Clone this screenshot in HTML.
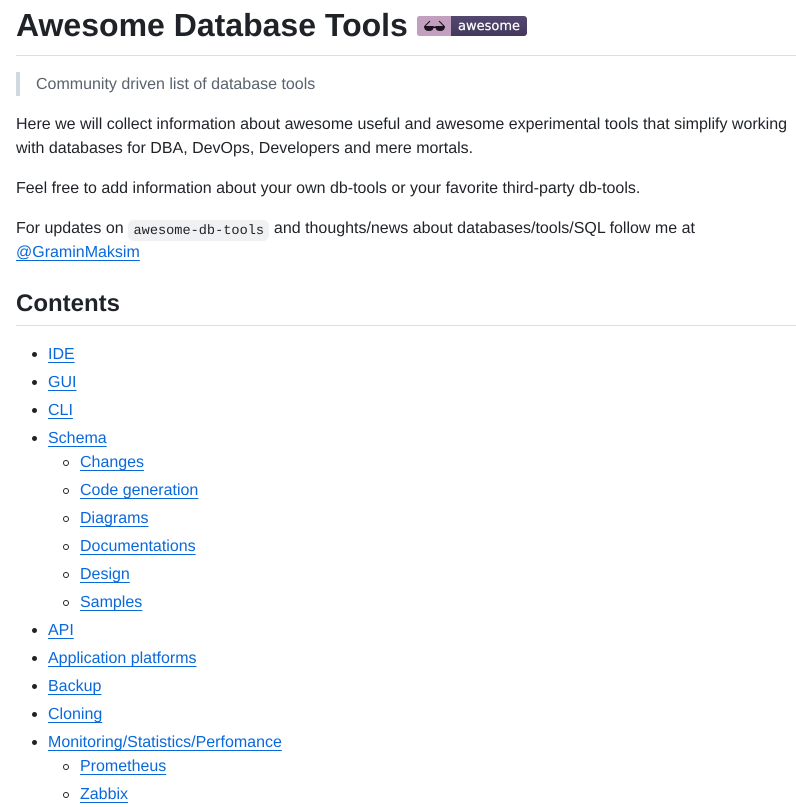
<!DOCTYPE html>
<html lang="en">
<head>
<meta charset="utf-8">
<title>Awesome Database Tools</title>
<style>
html,body{margin:0;padding:0;background:#fff;}
body{width:796px;height:794px;overflow:hidden;position:relative;font-family:"Liberation Sans",sans-serif;font-size:16px;line-height:1.5;color:#1f2328;text-rendering:geometricPrecision;}
#c{position:absolute;left:16px;top:0;width:780px;}
h1{margin:5.4px 0 16px;font-size:32px;line-height:40px;font-weight:600;padding-bottom:9.6px;border-bottom:1px solid #d8dee4;white-space:nowrap;}
h1 svg{vertical-align:baseline;position:relative;top:0;}
h2{position:absolute;left:0;top:288px;width:780px;height:37px;margin:0;font-size:24px;line-height:30px;font-weight:600;border-bottom:1px solid #d8dee4;}
h2 span{position:relative;top:1px;}
blockquote{margin:0 0 16px;padding:0 16px;border-left:4px solid #d1d9e0;color:#59636e;height:24px;}
blockquote span,p span.t{position:relative;top:1px;}
p{margin:0 0 16px;}
p span.g{position:relative;top:-0.6px;}
code{font-family:"Liberation Mono",monospace;font-size:13.6px;padding:2.72px 5.44px;background:#eff1f3;border-radius:6px;}
code span{position:relative;top:1px;}
a{color:#0969da;text-decoration:underline;text-underline-offset:3.2px;}
ul{margin:0;padding-left:32px;}
#list{position:absolute;left:0;top:343px;width:780px;}
li{list-style:none;position:relative;}
li+li{margin-top:4px;}
li::before{content:"";position:absolute;left:-16.5px;top:8.75px;width:5.5px;height:5.5px;border-radius:50%;background:#1f2328;}
ul ul li::before{left:-16.7px;top:8.7px;width:6px;height:6px;box-sizing:border-box;background:#fff;border:1px solid #1f2328;}
</style>
</head>
<body>
<div id="c">
<h1>Awesome Database Tools <svg width="110" height="20" viewBox="0 0 110 20" xmlns="http://www.w3.org/2000/svg"><defs><linearGradient id="g" x1="0" y1="0" x2="0" y2="1"><stop offset="0" stop-color="#54486f"/><stop offset="1" stop-color="#43395c"/></linearGradient></defs><rect width="110" height="20" rx="3" fill="url(#g)"/><path d="M3 0H34V20H3A3 3 0 0 1 0 17V3A3 3 0 0 1 3 0Z" fill="#c39fbf"/><path d="M8 10L13 5M27 10L22 5" stroke="#1c1420" stroke-width="1.1" fill="none"/><path d="M7 10H16.500C17 13 15.500 15 12 15C9 15 7 13.500 7 10ZM18.500 10H28C28 13.500 26 15 23 15C19.500 15 18 13 18.500 10ZM16 10.500H19V12H16Z" fill="#1c1420"/><text x="41" y="14" font-family="'DejaVu Sans',sans-serif" font-size="13" font-weight="400" fill="#fff" stroke="#fff" stroke-width="0.2" textLength="62" lengthAdjust="spacingAndGlyphs">awesome</text></svg></h1>
<blockquote><span>Community driven list of database tools</span></blockquote>
<p><span class="t">Here we will collect information about awesome useful and awesome experimental tools that simplify working with databases for DBA, DevOps, Developers and mere mortals.</span></p>
<p><span class="t">Feel free to add information about your own db-tools or your favorite third-party db-tools.</span></p>
<p><span class="t">For updates on <code><span>awesome-db-tools</span></code> and thoughts/news about databases/tools/SQL follow me at <span class="g"><a href="#">@GraminMaksim</a></span></span></p>
<h2><span>Contents</span></h2>
<ul id="list">
<li><a href="#">IDE</a></li>
<li><a href="#">GUI</a></li>
<li><a href="#">CLI</a></li>
<li><a href="#">Schema</a>
<ul>
<li><a href="#">Changes</a></li>
<li><a href="#">Code generation</a></li>
<li><a href="#">Diagrams</a></li>
<li><a href="#">Documentations</a></li>
<li><a href="#">Design</a></li>
<li><a href="#">Samples</a></li>
</ul>
</li>
<li><a href="#">API</a></li>
<li><a href="#">Application platforms</a></li>
<li><a href="#">Backup</a></li>
<li><a href="#">Cloning</a></li>
<li><a href="#">Monitoring/Statistics/Perfomance</a>
<ul>
<li><a href="#">Prometheus</a></li>
<li><a href="#">Zabbix</a></li>
</ul>
</li>
</ul>
</div>
</body>
</html>
